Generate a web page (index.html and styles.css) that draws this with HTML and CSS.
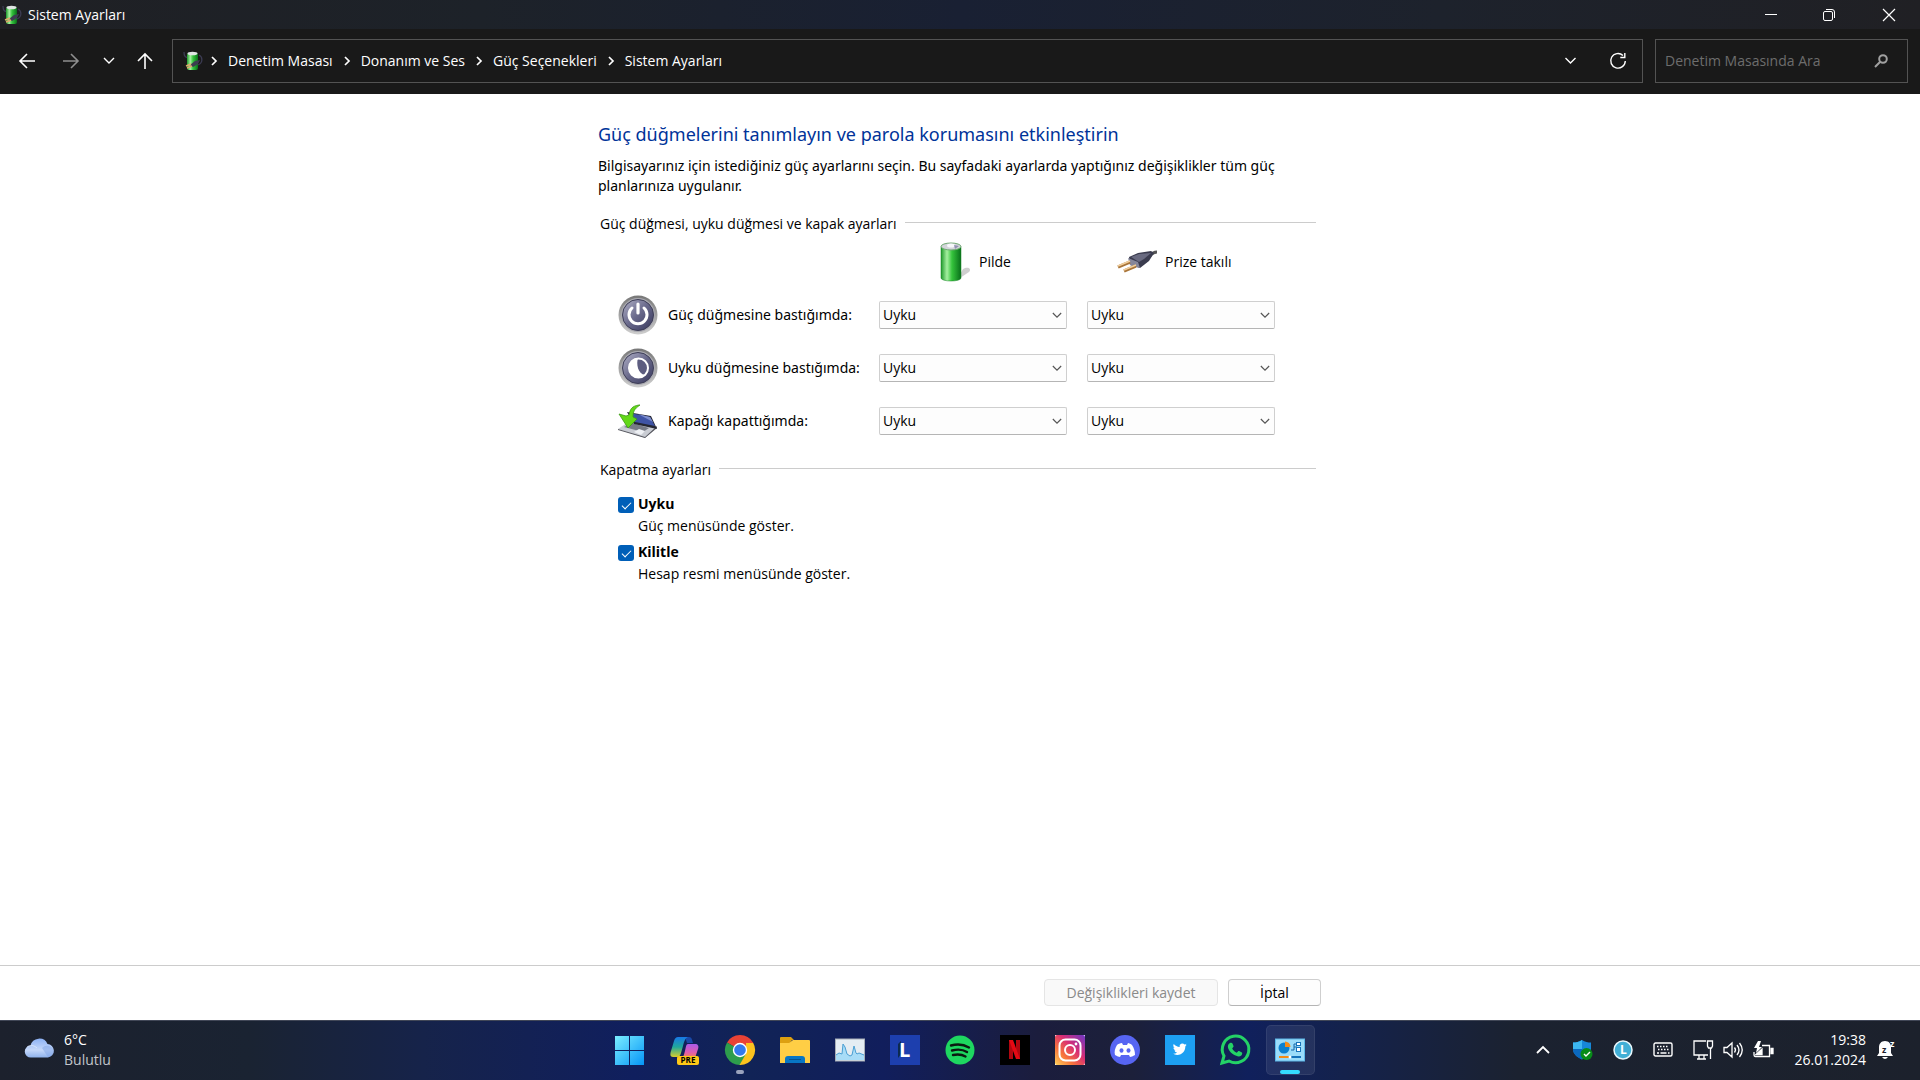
FILE: index.html
```html
<!DOCTYPE html>
<html lang="tr">
<head>
	<meta charset="utf-8">
	<meta name="viewport" content="width=device-width, initial-scale=1">
	<title>Sistem Ayarları</title>
	<link rel="stylesheet" href="styles.css">
</head>
<body>
	<!-- shared icons and gradients -->
	<svg class="defs" width="0" height="0" aria-hidden="true">
		<defs>
			<linearGradient id="green" x1="0" x2="1" y1="0" y2="0">
				<stop offset="0" stop-color="#1f9a2c"/>
				<stop offset=".3" stop-color="#a5f0a0"/>
				<stop offset=".55" stop-color="#35c43c"/>
				<stop offset="1" stop-color="#08701a"/>
			</linearGradient>
			<linearGradient id="knob" x1="0" x2="1" y1="0" y2="1">
				<stop offset="0" stop-color="#b2b2c8"/>
				<stop offset=".5" stop-color="#68688a"/>
				<stop offset="1" stop-color="#38385c"/>
			</linearGradient>
			<linearGradient id="knob-rim" x1="0" x2="0" y1="0" y2="1">
				<stop offset="0" stop-color="#777"/>
				<stop offset="1" stop-color="#cfcfcf"/>
			</linearGradient>
			<symbol id="power-options" viewBox="0 0 20 20">
				<path d="M1 1c0 4 1 5 4 6M16 4c4 2 4 8-1 10" fill="none" stroke="#3b3b52" stroke-width="1.300"/>
				<rect x="4" y="2" width="11" height="17" rx="2" fill="url(#green)"/>
				<ellipse cx="9.500" cy="2.500" rx="5" ry="1.800" fill="#dfe5e3"/>
				<path d="M7 14l5-4 5-1-2 4-5 3z" fill="#3c3d50"/>
				<path d="M3 15l5-2M4 17l5-2" stroke="#e0a96c" stroke-width="1.500"/>
			</symbol>
			<symbol id="chev-right" viewBox="0 0 8 10">
				<path d="M2 1l4 4-4 4" fill="none" stroke="currentColor" stroke-width="1.700"/>
			</symbol>
			<symbol id="chev-down" viewBox="0 0 12 8">
				<path d="M1 1l5 5 5-5" fill="none" stroke="currentColor" stroke-width="1.400"/>
			</symbol>
		</defs>
	</svg>

	<header class="titlebar">
		<svg class="icon-20"><use href="#power-options"/></svg>
		<span class="titlebar-text">Sistem Ayarları</span>
		<div class="window-buttons">
			<button aria-label="Simge durumuna küçült"><svg width="12" height="12"><path d="M0 5.500h12" stroke="#fff"/></svg></button>
			<button aria-label="Önceki boyut"><svg width="12" height="12" fill="none" stroke="#fff"><rect x=".5" y="2.500" width="9" height="9" rx="1.500"/><path d="M3 .5h6a2.500 2.500 0 0 1 2.500 2.500v6"/></svg></button>
			<button aria-label="Kapat"><svg width="12" height="12"><path d="M0 0l12 12M12 0L0 12" stroke="#fff" stroke-width="1.200"/></svg></button>
		</div>
	</header>

	<nav class="navbar">
		<div class="nav-buttons">
			<button aria-label="Geri"><svg width="16" height="16"><path d="M16 8H1M8 1L1 8l7 7" fill="none" stroke="#fff" stroke-width="1.600"/></svg></button>
			<button aria-label="İleri" disabled><svg width="16" height="16"><path d="M0 8h15M8 1l7 7-7 7" fill="none" stroke="#8f8f8f" stroke-width="1.600"/></svg></button>
			<button class="narrow" aria-label="Son konumlar"><svg width="12" height="8" color="#fff"><use href="#chev-down"/></svg></button>
			<button class="up" aria-label="Yukarı"><svg width="16" height="16"><path d="M8 16V1M1 8l7-7 7 7" fill="none" stroke="#fff" stroke-width="1.600"/></svg></button>
		</div>
		<div class="address">
			<svg class="icon-20"><use href="#power-options"/></svg>
			<svg class="sep"><use href="#chev-right"/></svg>
			<a href="#">Denetim Masası</a>
			<svg class="sep"><use href="#chev-right"/></svg>
			<a href="#">Donanım ve Ses</a>
			<svg class="sep"><use href="#chev-right"/></svg>
			<a href="#">Güç Seçenekleri</a>
			<svg class="sep"><use href="#chev-right"/></svg>
			<a href="#">Sistem Ayarları</a>
			<div class="address-buttons">
				<button aria-label="Önceki konumlar"><svg width="13" height="8" color="#fff"><use href="#chev-down"/></svg></button>
				<button aria-label="Yenile"><svg width="18" height="18" fill="none" stroke="#fff" stroke-width="1.400"><path d="M14 3.500A7.300 7.300 0 1 0 16.300 9M15.800 1v4.500h-4.500"/></svg></button>
			</div>
		</div>
		<label class="search">
			<input type="text" placeholder="Denetim Masasında Ara" aria-label="Denetim Masasında Ara">
			<svg width="14" height="14" fill="none" stroke="#a0a0a0" stroke-width="2"><circle cx="9" cy="5" r="3.800"/><path d="M6.200 7.800L1 13"/></svg>
		</label>
	</nav>

	<main class="content">
		<div class="page">
			<h1>Güç düğmelerini tanımlayın ve parola korumasını etkinleştirin</h1>
			<p class="intro">Bilgisayarınız için istediğiniz güç ayarlarını seçin. Bu sayfadaki ayarlarda yaptığınız değişiklikler tüm güç planlarınıza uygulanır.</p>

			<section>
				<h2>Güç düğmesi, uyku düğmesi ve kapak ayarları</h2>
				<div class="power-grid">
					<div class="source on-battery">
						<svg width="32" height="40" viewBox="0 0 32 40">
							<path d="M18 38l12-8c3-3-1-6-6-3z" fill="#bbb" opacity=".7"/>
							<path d="M2 4v32c0 4 20 4 20 0V4z" fill="url(#green)"/>
							<path d="M2 5v31c0 4 20 4 20 0V5" fill="none" stroke="#178625" opacity=".5"/>
							<ellipse cx="12" cy="4.500" rx="10" ry="3.500" fill="#d3d5da" stroke="#70a873"/>
							<ellipse cx="12" cy="3.500" rx="4" ry="2" fill="#f7f7fb"/>
							<path d="M15 3l5 1-4 3z" fill="#9290b2"/>
						</svg>
						<span>Pilde</span>
					</div>
					<div class="source plugged">
						<svg width="40" height="40" viewBox="0 0 40 40">
							<path d="M33 14c2-3 4-4 7-4" fill="none" stroke="#555" stroke-width="3"/>
							<path d="M12 15l9-4 13-2 3 2-5 8-9 7-10-3z" fill="#3a3b4e"/>
							<path d="M14 15l8-3 12-1-7 6-5 3z" fill="#696a80"/>
							<path d="M11 16l10 4 2 6-10-3z" fill="#85869a"/>
							<path d="M1 25l12-5M7 29l12-5" stroke="#a87438" stroke-width="3.400"/>
							<path d="M1 24l12-5M7 28l12-5" stroke="#f2cf9c" stroke-width="1.500"/>
						</svg>
						<span>Prize takılı</span>
					</div>

					<svg class="row-icon" viewBox="0 0 40 40">
						<circle cx="20" cy="20" r="19.500" fill="url(#knob-rim)"/>
						<circle cx="20" cy="20" r="17" fill="#a9a9b0"/>
						<circle cx="20" cy="20" r="15.500" fill="url(#knob)" stroke="#3e3e57"/>
						<path d="M14 13a9 9 0 1 0 12 0" fill="none" stroke="#fff" stroke-width="3" stroke-linecap="round"/>
						<path d="M20 9v9" stroke="#fff" stroke-width="3.200" stroke-linecap="round"/>
					</svg>
					<span class="row-label">Güç düğmesine bastığımda:</span>
					<div class="dropdown"><select aria-label="Güç düğmesine bastığımda, pilde"><option>Uyku</option></select><svg><use href="#chev-down"/></svg></div>
					<div class="dropdown"><select aria-label="Güç düğmesine bastığımda, prize takılı"><option>Uyku</option></select><svg><use href="#chev-down"/></svg></div>

					<svg class="row-icon" viewBox="0 0 40 40">
						<circle cx="20" cy="20" r="19.500" fill="url(#knob-rim)"/>
						<circle cx="20" cy="20" r="17" fill="#a9a9b0"/>
						<circle cx="20" cy="20" r="15.500" fill="url(#knob)" stroke="#3e3e57"/>
						<circle cx="20.500" cy="20" r="9.500" fill="#5d5d80" stroke="#fff" stroke-width="2"/>
						<path d="M20 10C12 11 10 17 11 22s7 9 13 7c2-1 3-2 3-2-7-1-9-11-7-17z" fill="#fff"/>
					</svg>
					<span class="row-label">Uyku düğmesine bastığımda:</span>
					<div class="dropdown"><select aria-label="Uyku düğmesine bastığımda, pilde"><option>Uyku</option></select><svg><use href="#chev-down"/></svg></div>
					<div class="dropdown"><select aria-label="Uyku düğmesine bastığımda, prize takılı"><option>Uyku</option></select><svg><use href="#chev-down"/></svg></div>

					<svg class="row-icon" viewBox="0 0 40 40">
						<path d="M0 28l12-8 27 6-12 11z" fill="#c9ccd3"/>
						<path d="M27 36l12-11v2L27 37 0 29v-1z" fill="#55565e"/>
						<path d="M6 26l8-4 17 5-6 4z" fill="#777b86"/>
						<path d="M16 31l5-3 6 2-4 4z" fill="#eef0f4"/>
						<path d="M9 11l24 4 6 13-23-5z" fill="#252733"/>
						<path d="M12 12l20 4 5 9-20-4z" fill="#3f54a5"/>
						<path d="M20 13l12 3 3 5z" fill="#7d8dce"/>
						<path d="M21 4C14 5 12 8 11 14l-3 1-7-2 9 14 9-9-4-2c0-5 1-8 7-12z" fill="#62d817" stroke="#3c9b13" stroke-width=".8"/>
					</svg>
					<span class="row-label">Kapağı kapattığımda:</span>
					<div class="dropdown"><select aria-label="Kapağı kapattığımda, pilde"><option>Uyku</option></select><svg><use href="#chev-down"/></svg></div>
					<div class="dropdown"><select aria-label="Kapağı kapattığımda, prize takılı"><option>Uyku</option></select><svg><use href="#chev-down"/></svg></div>
				</div>
			</section>

			<section>
				<h2>Kapatma ayarları</h2>
				<div class="shutdown">
					<input type="checkbox" id="sleep" checked>
					<label for="sleep">Uyku</label>
					<p>Güç menüsünde göster.</p>
					<input type="checkbox" id="lock" checked>
					<label for="lock">Kilitle</label>
					<p>Hesap resmi menüsünde göster.</p>
				</div>
			</section>
		</div>
	</main>

	<footer class="actions">
		<div class="page">
			<button class="save" disabled>Değişiklikleri kaydet</button>
			<button class="cancel">İptal</button>
		</div>
	</footer>

	<div class="taskbar">
		<button class="weather">
			<svg width="30" height="20" viewBox="0 0 30 20">
				<defs><linearGradient id="cloud" x1="0" x2="0" y1="0" y2="1"><stop offset="0" stop-color="#8db2f5"/><stop offset=".6" stop-color="#c5d8fa"/><stop offset="1" stop-color="#8fb2ec"/></linearGradient></defs>
				<path d="M6 19.500a6 6 0 0 1-.5-12A9 9 0 0 1 22.500 6 6.800 6.800 0 0 1 23 19.500z" fill="url(#cloud)"/>
				<path d="M17 10a7 7 0 0 1 12 3 6 6 0 0 1-6 6" fill="#7fa4e6" opacity=".5"/>
				<path d="M2 9c4-3 8-1 10 1" fill="none" stroke="#eaf1ff" opacity=".6"/>
			</svg>
			<span>6°C<br><small>Bulutlu</small></span>
		</button>

		<div class="apps">
			<button aria-label="Başlat"><svg width="30" height="30" viewBox="0 0 30 30">
				<defs><linearGradient id="win" x1="0" x2="1" y1="0" y2="1"><stop offset="0" stop-color="#7beeff"/><stop offset="1" stop-color="#0595f7"/></linearGradient></defs>
				<path d="M0 1h14v14H0zM15 1h14v14H15zM0 16h14v14H0zM15 16h14v14H15z" fill="url(#win)"/></svg></button>
			<button aria-label="Copilot"><svg width="30" height="30" viewBox="0 0 30 30">
				<defs>
					<linearGradient id="cop1" x1="0" x2="0" y1="0" y2="1"><stop offset="0" stop-color="#1878e8"/><stop offset=".5" stop-color="#20a89b"/><stop offset="1" stop-color="#d6cf2d"/></linearGradient>
					<linearGradient id="cop2" x1="0" x2="0" y1="0" y2="1"><stop offset="0" stop-color="#aa5bea"/><stop offset=".6" stop-color="#e05cae"/><stop offset="1" stop-color="#f5834d"/></linearGradient>
				</defs>
				<path d="M15 2h4c3 0 3 3 4 6h-6z" fill="#1848a8"/>
				<path d="M8 2h10c-3 1-4 5-5 9l-2 7c-1 3-2 4-4 4H3c-3 0-3-3-2-6l3-10c1-3 2-4 4-4z" fill="url(#cop1)"/>
				<path d="M18 9h7c3 0 4 2 3 5l-3 9H11c3-1 3-4 4-7 1-4 1-7 3-7z" fill="url(#cop2)"/>
				<rect x="7" y="21" width="22" height="9" rx="2" fill="#ffc817"/>
				<text x="18" y="28" class="pre-badge" text-anchor="middle">PRE</text></svg></button>
			<button class="running" aria-label="Google Chrome"><svg width="30" height="30" viewBox="0 0 30 30">
				<path d="M15 15L2 7.500A15 15 0 0 1 28 7.500z" fill="#e94235"/>
				<path d="M2 7.500A15 15 0 0 0 15 30l6.500-11.200L15 15z" fill="#2d9d4c"/>
				<path d="M28 7.500A15 15 0 0 1 14.500 30l6.500-11.200L21 8z" fill="#fcc31e"/>
				<path d="M15 7.500h13" stroke="#e94235" stroke-width="1"/>
				<circle cx="15" cy="15" r="7.200" fill="#fff"/><circle cx="15" cy="15" r="5.800" fill="#3379ed"/></svg></button>
			<button aria-label="Dosya Gezgini"><svg width="30" height="30" viewBox="0 0 30 30">
				<path d="M0 3q0-1 1-1h10l3 3h-2L9 9H0z" fill="#dda011"/>
				<path d="M0 8h9l4-3h16q1 0 1 1v22H0z" fill="#ffce45"/>
				<path d="M5 28v-4q0-3 3-3h14q3 0 3 3v4z" fill="#0876c4"/><path d="M9 24.500h12" stroke="#08548f"/></svg></button>
			<button aria-label="Sistem İzleyici"><svg width="30" height="24" viewBox="0 0 30 24">
				<rect x=".5" y="1" width="29" height="22" fill="#e5edf3" stroke="#a7aeb7"/>
				<path d="M1 17l3-2 3 1 1-10 2 3 2 7 3 2 2-1 2-9 2 7 1 1 2-1 5 2v5H1z" fill="#a8dcf7"/>
				<path d="M1 17l3-2 3 1 1-10 2 3 2 7 3 2 2-1 2-9 2 7 1 1 2-1 5 2" fill="none" stroke="#4b9fd3"/></svg></button>
			<button aria-label="L"><svg width="30" height="30" viewBox="0 0 30 30">
				<rect width="30" height="30" fill="#1d3fae"/>
				<path d="M11 6v13l-3 4V9z" fill="#0c2a50"/>
				<text x="9" y="22" class="letter-l">L</text></svg></button>
			<button aria-label="Spotify"><svg width="30" height="30" viewBox="0 0 30 30">
				<circle cx="15" cy="15" r="14.500" fill="#1ed760"/>
				<path d="M6 10.500c7-2 13-1 18 2M7 15.500c6-1.600 11-1 15 1.500M8 20c5-1 9-.6 12.500 1.500" fill="none" stroke="#0b1a11" stroke-width="2.400" stroke-linecap="round"/></svg></button>
			<button aria-label="Netflix"><svg width="30" height="30" viewBox="0 0 30 30">
				<rect width="30" height="30" fill="#000"/>
				<rect x="9" y="5" width="4" height="19" fill="#b1060f"/><rect x="16" y="5" width="4" height="19" fill="#b1060f"/>
				<path d="M9 5h4l7 19h-4z" fill="#e50914"/></svg></button>
			<button aria-label="Instagram"><svg width="30" height="30" viewBox="0 0 30 30">
				<defs><linearGradient id="insta" x1="0" x2="1" y1="1" y2="0"><stop offset="0" stop-color="#ffd45c"/><stop offset=".3" stop-color="#f8763b"/><stop offset=".6" stop-color="#d82d75"/><stop offset="1" stop-color="#6b38c5"/></linearGradient></defs>
				<rect width="30" height="30" fill="#fff"/><rect width="30" height="30" rx="2" fill="url(#insta)"/>
				<g fill="none" stroke="#fff" stroke-width="2"><rect x="4.500" y="4.500" width="21" height="21" rx="6"/><circle cx="15" cy="15" r="5"/></g><circle cx="21" cy="9" r="1.400" fill="#fff"/></svg></button>
			<button aria-label="Discord"><svg width="30" height="30" viewBox="0 0 30 30">
				<circle cx="15" cy="15" r="15" fill="#5765f2"/>
				<path d="M12 8c-2 0-4 1-5 2-2 3-3 7-2 10 2 1 4 2 5 2l1-2h8l1 2c1 0 3-1 5-2 0-4-1-7-3-10-1-1-3-2-4-2l-1 2h-4z" fill="#fff"/>
				<ellipse cx="11.500" cy="15.500" rx="2" ry="2.200" fill="#5765f2"/><ellipse cx="18.500" cy="15.500" rx="2" ry="2.200" fill="#5765f2"/></svg></button>
			<button aria-label="Twitter"><svg width="30" height="30" viewBox="0 0 30 30">
				<rect width="30" height="30" fill="#1d9ff2"/>
				<g transform="translate(8 7) scale(.58)"><path d="M23.600 4.900c-.9.400-1.800.7-2.800.8 1-.6 1.800-1.600 2.200-2.700-1 .6-2 1-3.100 1.200A4.900 4.900 0 0 0 11.500 8.700C7.400 8.500 3.800 6.500 1.400 3.600a4.900 4.900 0 0 0 1.500 6.600c-.8 0-1.600-.2-2.200-.6 0 2.300 1.600 4.400 3.900 4.900-.7.200-1.500.2-2.200.1a4.900 4.900 0 0 0 4.600 3.400A9.900 9.900 0 0 1-.3 20c2.200 1.400 4.800 2.200 7.500 2.200 9.100 0 14.300-7.700 14-14.600 1-.7 1.800-1.600 2.400-2.700z" fill="#fff"/></g></svg></button>
			<button aria-label="WhatsApp"><svg width="30" height="30" viewBox="0 0 30 30">
				<path d="M2 28l2-7A13.300 13.300 0 1 1 9 26z" fill="none" stroke="#24d266" stroke-width="3"/>
				<path d="M10 8c1-.6 2-.4 2.500.5l1 2.600c.2.700-.2 1.100-1.300 2.400.8 1.900 2.600 3.500 4.600 4.300 1.200-1.500 1.600-2 2.300-1.700l2.800 1.400c.6.400.3 2.200-.6 3-2 1.700-4.800.8-7.800-1C9.500 17 7.300 13 8 10.500 8.300 9.400 9 8.500 10 8z" fill="#24d266"/></svg></button>
			<button class="active" aria-label="Sistem Ayarları"><svg width="30" height="24" viewBox="0 0 30 24">
				<rect x=".5" y="1" width="29" height="22" fill="#9bdcf9" stroke="#5cb8e8"/>
				<circle cx="9" cy="10" r="5.500" fill="#0b80cf"/><path d="M10 9V3.500A5.500 5.500 0 0 1 15.500 9z" fill="#f48b16"/>
				<path d="M16 12h3V6h3M19 9h3" fill="none" stroke="#1467a8"/>
				<g fill="#fff" stroke="#1673ba"><rect x="21.500" y="4.500" width="4" height="3"/><rect x="21.500" y="9.500" width="4" height="4"/></g>
				<path d="M4 19h11" stroke="#f48b16" stroke-width="2"/><path d="M15 19h11" stroke="#1673ba" stroke-width="2"/><circle cx="15" cy="19" r="1.500" fill="#fff"/></svg></button>
		</div>

		<div class="tray">
			<button aria-label="Gizli simgeler"><svg width="14" height="9"><path d="M1 8l6-6 6 6" fill="none" stroke="#fff" stroke-width="1.800"/></svg></button>
			<button aria-label="Windows Güvenliği"><svg width="20" height="20" viewBox="0 0 20 20">
				<path d="M9 0c3 2 6 2.500 9 2.500V9c0 5-4 8-9 10.500C4 17 0 14 0 9V2.500C3 2.500 6 2 9 0z" fill="#1687d9"/>
				<path d="M9 0v9H0V2.500C3 2.500 6 2 9 0z" fill="#3cb6ef"/><path d="M9 9v10.500C4 17 0 14 0 9z" fill="#0b68bd"/>
				<circle cx="13.500" cy="14" r="6" fill="#078c18"/><path d="M11 14l2 2 4-4" fill="none" stroke="#fff" stroke-width="1.400"/></svg></button>
			<button aria-label="L"><svg width="20" height="20" viewBox="0 0 20 20"><circle cx="10" cy="10" r="9" fill="#41afd6" stroke="#e7f7fc" stroke-width="1.500"/><text x="7" y="14" class="letter-l-small">L</text></svg></button>
			<button aria-label="Klavye"><svg width="20" height="16" fill="none" stroke="#fff" stroke-width="1.400"><rect x="1" y="1" width="18" height="13" rx="1.500"/><path d="M4 4.500h12M5 7.500h11" stroke-dasharray="1.500 1.500"/><path d="M4 11h2M7.500 11h6M15 11h1.500"/></svg></button>
			<button class="status" aria-label="Ağ, ses, pil">
				<svg width="20" height="20" fill="none" stroke="#fff" stroke-width="1.300"><path d="M13 1H1v14h14M4 19h9M6 15v4M11 15v4M17.500 8v11"/><path d="M14.500 1h5v5l-1 2h-3l-1-2z"/></svg>
				<svg width="20" height="16" fill="none" stroke="#fff" stroke-width="1.300"><path d="M1 5.500h3L9 1v14l-5-4.500H1zM11.500 5.500q2 2.500 0 5M14 3q4 5 0 10M16.500 1q5.500 7 0 14"/></svg>
				<svg width="20" height="18" fill="none" stroke="#fff" stroke-width="1.300"><path d="M9 4.500h7.500v11h-14q-1.500 0-1.500-2V11"/><path d="M18 7.500h2v5h-2z" fill="#fff"/><path d="M5 0L1 7h3l-1 5 6-6H6l2-6z" fill="#fff" stroke="none"/><path d="M3 13.500L9 8v5.500z" fill="#fff"/></svg>
			</button>
			<button class="clock">19:38<br>26.01.2024</button>
			<button class="bell" aria-label="Bildirimler"><svg width="18" height="20" viewBox="0 0 18 20">
				<path d="M8 1c4 0 6 3 6 6v6l2 3H0l2-3V7c0-3 2-6 6-6zM5 17h6q-3 4-6 0z" fill="#fff"/>
				<text x="5" y="13" class="bell-z dark">z</text><text x="13" y="7" class="bell-z">z</text></svg></button>
		</div>
	</div>
</body>
</html>
```
FILE: styles.css
```css
*{
	box-sizing: border-box;
}
body{
	margin: 0;
	min-height: 100vh;
	display: flex;
	flex-direction: column;
	background: white;
	color: black;
	font-family: 'Open Sans', 'Noto Sans', sans-serif;
	font-size: 14px;
	line-height: 20px;
}
button, input, select{
	font: inherit;
	color: inherit;
}
button{
	display: flex;
	align-items: center;
	justify-content: center;
	padding: 0;
	border: 0;
	background: none;
}
svg{
	flex: none;
	overflow: visible;
}
.defs{
	position: absolute;
}
.icon-20{
	width: 20px;
	height: 20px;
}

/* title bar */
.titlebar{
	height: 29px;
	display: flex;
	align-items: center;
	padding-left: 2px;
	color: white;
	background: linear-gradient(90deg, #1f2024, #1d2229 25%, #192033 50%, #1d222c 75%, #202024);
}
.titlebar-text{
	margin-left: 6px;
}
.window-buttons{
	display: flex;
	margin-left: auto;
	height: 100%;
}
.window-buttons button{
	width: 58px;
}
.window-buttons button:last-child{
	width: 62px;
}

/* navigation */
.navbar{
	height: 65px;
	display: flex;
	align-items: center;
	padding: 0 12px 1px 5px;
	background: #191919;
	color: white;
}
.nav-buttons{
	display: flex;
	width: 167px;
}
.nav-buttons button{
	width: 44px;
	height: 32px;
}
.nav-buttons .narrow{
	width: 32px;
}
.nav-buttons .up{
	width: 40px;
}
.address{
	flex: 1;
	height: 44px;
	display: flex;
	align-items: center;
	padding-left: 10px;
	border: 1px solid #535353;
}
.address .icon-20{
	margin-right: -3px;
}
.address a{
	color: white;
	text-decoration: none;
}
.sep{
	width: 8px;
	height: 10px;
	margin: 0 10px;
}
.address-buttons{
	display: flex;
	margin-left: auto;
}
.address-buttons button{
	width: 48px;
	height: 42px;
}
.search{
	width: 253px;
	height: 44px;
	display: flex;
	align-items: center;
	margin-left: 12px;
	padding: 0 19px 0 9px;
	border: 1px solid #535353;
}
.search input{
	flex: 1;
	min-width: 0;
	padding: 0;
	border: 0;
	outline: 0;
	background: none;
}
.search input::placeholder{
	color: #6d6d6d;
	opacity: 1;
}

/* page */
.content{
	flex: 1;
}
.page{
	max-width: 724px;
	margin: 0 auto;
}
h1{
	margin: 0;
	padding-top: 26px;
	font-family: 'Noto Sans', sans-serif;
	font-size: 18px;
	line-height: 28px;
	font-weight: normal;
	color: #003399;
}
.intro{
	margin: 8px 0 18px;
	font-family: 'Noto Sans', sans-serif;
}
h2{
	display: flex;
	align-items: center;
	gap: 8px;
	margin: 0 6px 0 2px;
	font-size: 14px;
	font-weight: normal;
}
h2::after{
	content: "";
	flex: 1;
	height: 1px;
	margin-bottom: 3px;
	background: #cccccc;
}
.power-grid{
	display: grid;
	grid-template-columns: 40px 181px 188px 188px;
	grid-template-rows: 56px 50px 56px 50px;
	column-gap: 20px;
	align-items: center;
	margin-left: 20px;
	margin-bottom: 14px;
}
.source{
	display: flex;
	align-items: center;
	gap: 8px;
}
.on-battery{
	grid-column: 3;
	padding-left: 60px;
}
.plugged{
	grid-column: 4;
	padding-left: 30px;
}
.row-icon{
	width: 40px;
	height: 40px;
}
.row-label{
	margin-left: -10px;
	white-space: nowrap;
	font-family: 'Noto Sans', sans-serif;
}
.dropdown{
	display: grid;
	align-items: center;
}
.dropdown > *{
	grid-area: 1 / 1;
}
.dropdown select{
	appearance: none;
	width: 100%;
	height: 28px;
	padding: 0 3px;
	border: 1px solid #cfcfcf;
	border-bottom-color: #b5b5b5;
	border-radius: 2px;
	background: #fdfdfd;
}
.dropdown svg{
	justify-self: end;
	width: 10px;
	height: 7px;
	margin-right: 5px;
	color: #555;
	pointer-events: none;
}
.shutdown{
	display: grid;
	grid-template-columns: 16px 1fr;
	column-gap: 4px;
	align-items: center;
	margin: 14px 0 0 20px;
}
.shutdown label{
	font-weight: bold;
	line-height: 20px;
}
.shutdown p{
	grid-column: 2;
	margin: 2px 0 6px;
}
.shutdown input{
	appearance: none;
	display: grid;
	place-items: center;
	width: 16px;
	height: 16px;
	margin: 2px 0 0;
	border-radius: 3px;
	background: #005fb8;
}
.shutdown input:checked::after{
	content: "";
	width: 8px;
	height: 4px;
	margin-bottom: 2px;
	border: solid white;
	border-width: 0 0 1px 1px;
	transform: rotate(-45deg);
}

/* footer buttons */
.actions{
	height: 55px;
	border-top: 1px solid #cccccc;
}
.actions .page{
	display: flex;
	justify-content: flex-end;
	gap: 10px;
	padding: 13px 1px 0 0;
}
.actions button{
	height: 27px;
	border: 1px solid #cfcfcf;
	border-radius: 4px;
	background: #fdfdfd;
}
.actions .save{
	width: 174px;
	border-color: #e5e5e5;
	background: #f9f9f9;
	color: #8a8a8a;
}
.actions .cancel{
	width: 93px;
	border-bottom-color: #b5b5b5;
}

/* taskbar */
.taskbar{
	height: 60px;
	display: grid;
	grid-template-columns: 1fr auto 1fr;
	align-items: center;
	padding-bottom: 2px;
	border-top: 1px solid #414757;
	color: white;
	background: linear-gradient(90deg, #1c212d 0%, #1a2332 13%, #16234a 22%, #101f5e 33%, #112356 39%, #111e5c 46%, #1b1d3d 54%, #1c203a 59%, #10205c 65%, #14224c 70%, #1b2230 79%, #1c212c 100%);
}
.weather{
	justify-self: start;
	gap: 9px;
	padding-left: 25px;
	text-align: left;
}
.weather svg{
	margin-bottom: 4px;
}
.weather small{
	font-size: 14px;
	color: #c2c5cb;
}
.apps{
	display: flex;
}
.apps button{
	position: relative;
	width: 49px;
	height: 50px;
	margin: 0 3px;
	border-radius: 5px;
}
.apps .active{
	background: #ffffff14;
	box-shadow: inset 0 0 0 1px #ffffff12;
}
.running::after, .active::after{
	content: "";
	position: absolute;
	bottom: 1px;
	width: 8px;
	height: 4px;
	border-radius: 2px;
	background: #9aa3bd;
}
.active::after{
	width: 20px;
	background: #35dcff;
}
.pre-badge{
	font: bold 8px 'Open Sans', sans-serif;
}
.letter-l{
	font: bold 20px 'Open Sans', sans-serif;
	fill: white;
}
.letter-l-small{
	font: bold 12px 'Open Sans', sans-serif;
	fill: white;
}
.tray{
	justify-self: end;
	display: flex;
	align-items: center;
	padding-right: 25px;
}
.tray button{
	width: 40px;
	height: 48px;
}
.tray .status{
	width: auto;
	gap: 10px;
	margin: 0 22px 0 10px;
}
.tray .clock{
	display: block;
	width: auto;
	text-align: right;
}
.tray .bell{
	width: 18px;
	margin-left: 11px;
}
.bell-z{
	font: bold 9px 'Open Sans', sans-serif;
	fill: white;
}
.bell-z.dark{
	fill: #1c212c;
}
```
